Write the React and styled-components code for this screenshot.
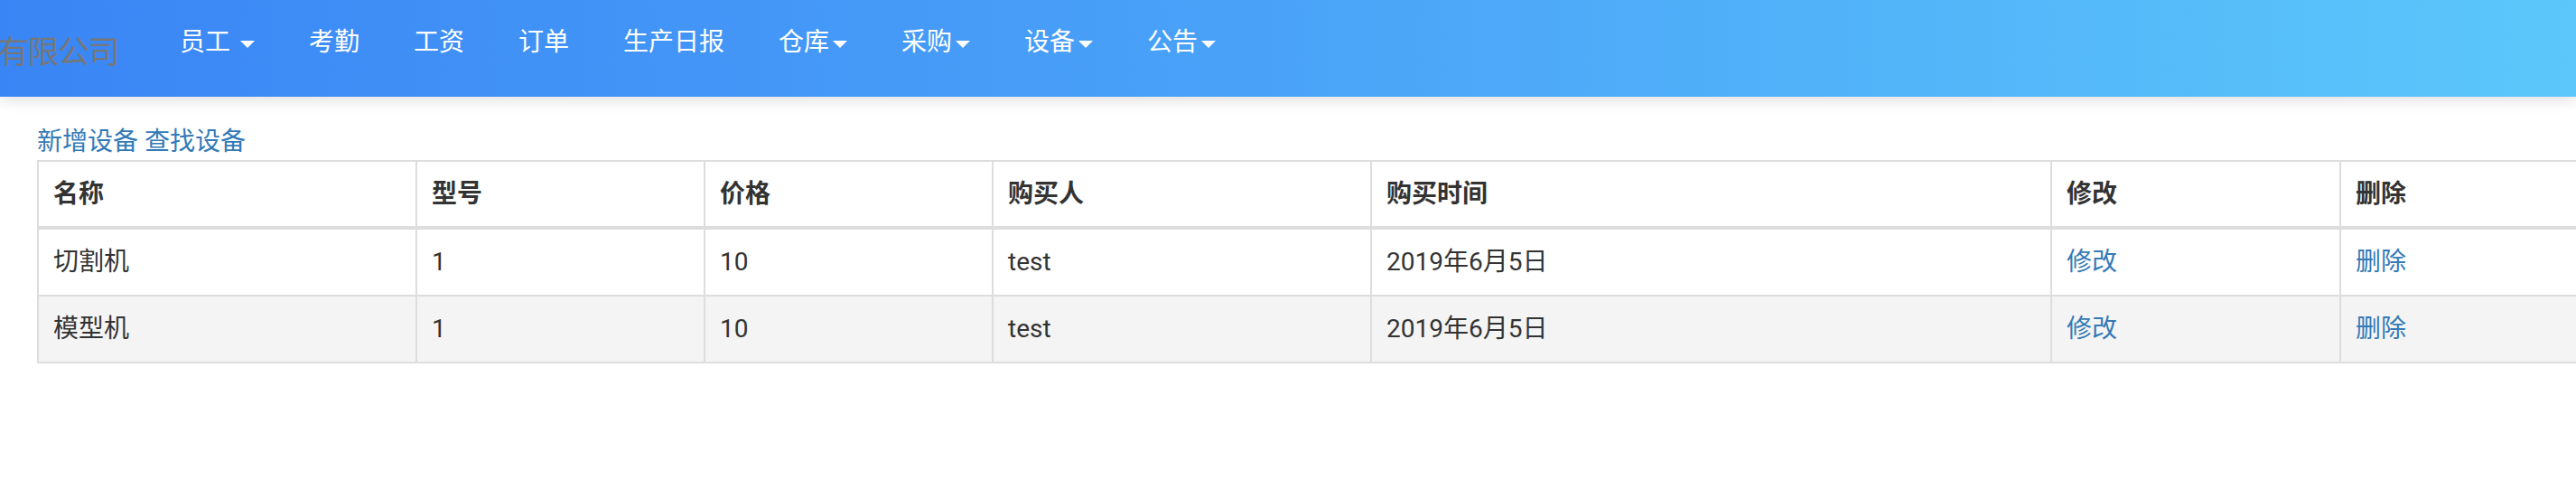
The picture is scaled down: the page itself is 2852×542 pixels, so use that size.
import React from "react";
import styled, { createGlobalStyle } from "styled-components";

const GlobalStyle = createGlobalStyle`
  html, body {
    margin: 0;
    padding: 0;
    background: #fff;
    overflow-x: hidden;
  }
  body {
    font-family: Roboto, "Noto Sans CJK SC", sans-serif;
    font-size: 28px;
    line-height: 40px;
    color: #333;
  }
  * { box-sizing: border-box; }
`;

const Page = styled.div`
  width: 100%;
  overflow: hidden;
`;

const Navbar = styled.header`
  position: relative;
  z-index: 1;
  height: 107px;
  display: flex;
  align-items: flex-start;
  background: linear-gradient(90deg, #3a85f5 0%, #4aa3f8 50%, #5bc7fa 100%);
  box-shadow: 0 3px 16px rgba(0, 0, 0, 0.14);
`;

const Brand = styled.a`
  flex: none;
  margin-left: -3px;
  padding: 39px 38px 0 0;
  font-size: 35px;
  line-height: 40px;
  letter-spacing: -1.5px;
  color: #777;
  white-space: nowrap;
  text-decoration: none;
`;

const NavList = styled.ul`
  display: flex;
  list-style: none;
  margin: 0;
  padding: 0;
`;

const NavLink = styled.a`
  display: block;
  padding: 27px 30px 0;
  font-size: 28px;
  line-height: 40px;
  color: #fff;
  white-space: nowrap;
  text-decoration: none;
`;

const Caret = styled.span`
  display: inline-block;
  width: 0;
  height: 0;
  margin-left: 4px;
  vertical-align: middle;
  border-top: 8px solid #fff;
  border-left: 8px solid transparent;
  border-right: 8px solid transparent;
`;

const Main = styled.main`
  padding: 30px 0 0 41px;
`;

const Actions = styled.div`
  font-size: 28px;
  line-height: 40px;
`;

const ActionLink = styled.a`
  color: #337ab7;
  text-decoration: none;
`;

const Table = styled.table`
  border-collapse: collapse;
  table-layout: fixed;
  width: 2968px;
  margin: 0;
`;

const Th = styled.th`
  padding: 16px 16px 15px;
  border: 2px solid #ddd;
  border-bottom-width: 4px;
  text-align: left;
  font-weight: 700;
  color: #333;
  vertical-align: bottom;
  white-space: nowrap;
`;

const Row = styled.tr`
  background: ${(p) => (p.$striped ? "#f4f4f4" : "#fff")};
`;

const Td = styled.td`
  padding: 16px;
  border: 2px solid #ddd;
  color: #333;
  vertical-align: top;
  white-space: nowrap;
`;

const CellLink = styled.a`
  color: #337ab7;
  text-decoration: none;
`;

const navItems = [
  { label: "员工", caret: true, spaced: true },
  { label: "考勤" },
  { label: "工资" },
  { label: "订单" },
  { label: "生产日报" },
  { label: "仓库", caret: true },
  { label: "采购", caret: true },
  { label: "设备", caret: true },
  { label: "公告", caret: true },
];

const columns = [
  { title: "名称", width: 419 },
  { title: "型号", width: 319 },
  { title: "价格", width: 319 },
  { title: "购买人", width: 419 },
  { title: "购买时间", width: 753 },
  { title: "修改", width: 320 },
  { title: "删除", width: 419 },
];

const rows = [
  { name: "切割机", model: "1", price: "10", buyer: "test", date: "2019年6月5日" },
  { name: "模型机", model: "1", price: "10", buyer: "test", date: "2019年6月5日" },
];

export default function App() {
  return (
    <Page>
      <GlobalStyle />
      <Navbar>
        <Brand href="#">有限公司</Brand>
        <NavList>
          {navItems.map((item) => (
            <li key={item.label}>
              <NavLink href="#">
                {item.label}
                {item.spaced ? " " : ""}
                {item.caret && <Caret />}
              </NavLink>
            </li>
          ))}
        </NavList>
      </Navbar>
      <Main>
        <Actions>
          <ActionLink href="#">新增设备</ActionLink> <ActionLink href="#">查找设备</ActionLink>
        </Actions>
        <Table>
          <colgroup>
            {columns.map((c) => (
              <col key={c.title} style={{ width: c.width }} />
            ))}
          </colgroup>
          <thead>
            <tr>
              {columns.map((c) => (
                <Th key={c.title}>{c.title}</Th>
              ))}
            </tr>
          </thead>
          <tbody>
            {rows.map((r, i) => (
              <Row key={r.name} $striped={i % 2 === 1}>
                <Td>{r.name}</Td>
                <Td>{r.model}</Td>
                <Td>{r.price}</Td>
                <Td>{r.buyer}</Td>
                <Td>{r.date}</Td>
                <Td>
                  <CellLink href="#">修改</CellLink>
                </Td>
                <Td>
                  <CellLink href="#">删除</CellLink>
                </Td>
              </Row>
            ))}
          </tbody>
        </Table>
      </Main>
    </Page>
  );
}
